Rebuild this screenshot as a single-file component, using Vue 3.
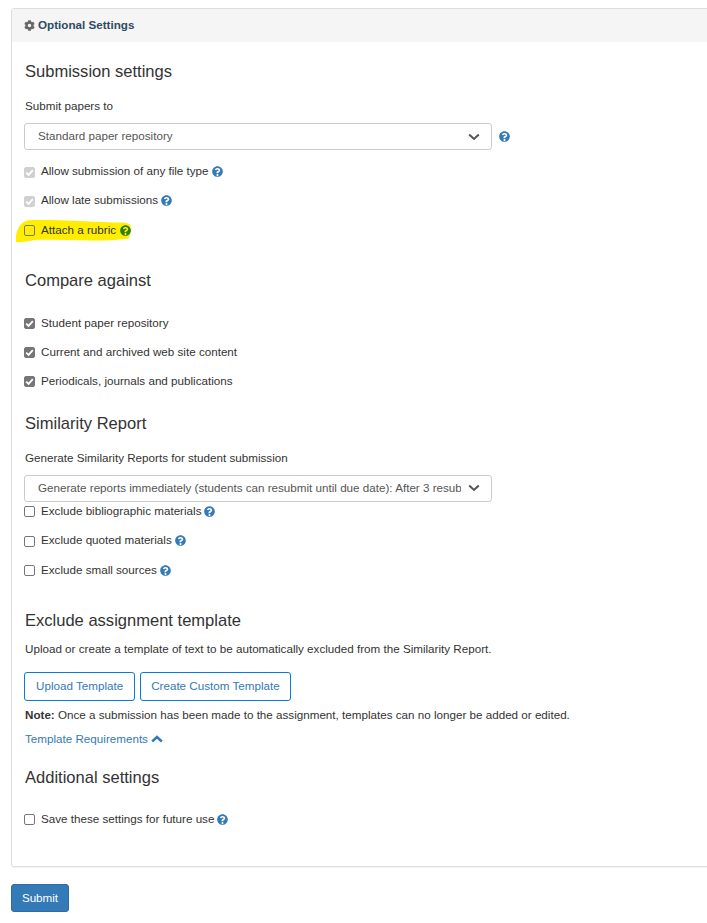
<script setup>
const cog = "M487.4 315.7l-42.6-24.6c4.3-23.2 4.3-47 0-70.2l42.6-24.6c4.9-2.8 7.1-8.6 5.5-14-11.1-35.6-30-67.8-54.7-94.6-3.8-4.1-10-5.1-14.8-2.3L380.8 110c-17.9-15.4-38.5-27.3-60.8-35.1V25.8c0-5.6-3.9-10.5-9.4-11.7-36.7-8.2-74.3-7.8-109.2 0-5.5 1.2-9.4 6.1-9.4 11.7V75c-22.2 7.9-42.8 19.8-60.8 35.1L88.7 85.5c-4.9-2.8-11-1.9-14.8 2.3-24.7 26.7-43.6 58.9-54.7 94.6-1.7 5.4.6 11.2 5.5 14L67.3 221c-4.3 23.2-4.3 47 0 70.2l-42.6 24.6c-4.9 2.8-7.1 8.6-5.5 14 11.1 35.6 30 67.8 54.7 94.6 3.8 4.1 10 5.1 14.8 2.3l42.6-24.6c17.9 15.4 38.5 27.3 60.8 35.1v49.2c0 5.6 3.9 10.5 9.4 11.7 36.7 8.2 74.3 7.8 109.2 0 5.5-1.2 9.4-6.1 9.4-11.7v-49.2c22.2-7.9 42.8-19.8 60.8-35.1l42.6 24.6c4.9 2.8 11 1.9 14.8-2.3 24.7-26.7 43.6-58.9 54.7-94.6 1.5-5.5-.7-11.3-5.6-14.1zM256 336c-44.1 0-80-35.9-80-80s35.9-80 80-80 80 35.9 80 80-35.9 80-80 80z";
const help = "M256 8C119 8 8 119.1 8 256s111 248 248 248 248-111 248-248S393 8 256 8zM263 90c-58 0-95 25-124 68-4 5-3 13 3 17l35 26c5 4 13 3 17-2 19-24 32-38 62-38 23 0 51 15 51 37 0 17-14 26-37 38-26 15-62 34-62 81v8c0 7 5 12 12 12h56c7 0 12-5 12-12v-5c0-33 96-34 96-122 0-67-69-108-121-108zM256 376c-26 0-47 21-47 47s21 47 47 47 47-21 47-47-21-47-47-47z";

const submission = [
  { label: "Allow submission of any file type", state: "disabled", info: true },
  { label: "Allow late submissions", state: "disabled", info: true },
  { label: "Attach a rubric", state: "off", info: true, marked: true },
];
const compare = [
  { label: "Student paper repository", state: "on" },
  { label: "Current and archived web site content", state: "on" },
  { label: "Periodicals, journals and publications", state: "on" },
];
const similarity = [
  { label: "Exclude bibliographic materials", state: "off", info: true },
  { label: "Exclude quoted materials", state: "off", info: true },
  { label: "Exclude small sources", state: "off", info: true },
];
</script>

<template>
  <div class="page">
    <section class="panel">
      <header class="panel-head">
        <svg class="cog" viewBox="0 0 512 512"><path :d="cog" /></svg>
        <span class="head-title">Optional Settings</span>
      </header>

      <div class="panel-body">
        <h3 class="first">Submission settings</h3>
        <p class="label">Submit papers to</p>
        <div class="select-row">
          <div class="select">
            <span class="select-text">Standard paper repository</span>
            <svg class="chevron" viewBox="0 0 12 8"><path d="M1.2 1.5 6 6l4.8-4.5" /></svg>
          </div>
          <svg class="help help-select" viewBox="0 0 512 512"><path :d="help" fill-rule="evenodd" /></svg>
        </div>
        <div class="checks checks-sub">
          <div v-for="item in submission" :key="item.label" class="check-row" :class="{ marked: item.marked }">
            <svg v-if="item.marked" class="marker" viewBox="0 0 120 24" preserveAspectRatio="none">
              <path d="M2 23C1 15 5 5 14 3 36 2 70 4 100 5c9 0 17 0 18 2 2 5 0 12-2 13-24 3-60 1-88 1-10 0-20 3-26 2z" />
            </svg>
            <span class="box" :class="item.state">
              <svg v-if="item.state !== 'off'" viewBox="0 0 12 12"><path d="M2.4 6.2 5 8.7l4.6-5.2" /></svg>
            </span>
            <span class="check-label">{{ item.label }}</span>
            <svg v-if="item.info" class="help" viewBox="0 0 512 512"><path :d="help" fill-rule="evenodd" /></svg>
          </div>
        </div>

        <h3 class="compare">Compare against</h3>
        <div class="checks checks-compare">
          <div v-for="item in compare" :key="item.label" class="check-row">
            <span class="box" :class="item.state">
              <svg viewBox="0 0 12 12"><path d="M2.4 6.2 5 8.7l4.6-5.2" /></svg>
            </span>
            <span class="check-label">{{ item.label }}</span>
          </div>
        </div>

        <h3 class="report">Similarity Report</h3>
        <p class="label label-report">Generate Similarity Reports for student submission</p>
        <div class="select-row">
          <div class="select">
            <span class="select-text">Generate reports immediately (students can resubmit until due date): After 3 resub</span>
            <svg class="chevron" viewBox="0 0 12 8"><path d="M1.2 1.5 6 6l4.8-4.5" /></svg>
          </div>
        </div>
        <div class="checks checks-report">
          <div v-for="item in similarity" :key="item.label" class="check-row">
            <span class="box" :class="item.state"></span>
            <span class="check-label">{{ item.label }}</span>
            <svg class="help" viewBox="0 0 512 512"><path :d="help" fill-rule="evenodd" /></svg>
          </div>
        </div>

        <h3 class="template">Exclude assignment template</h3>
        <p class="template-text">Upload or create a template of text to be automatically excluded from the Similarity Report.</p>
        <div class="template-buttons">
          <button class="btn-outline">Upload Template</button>
          <button class="btn-outline btn-custom">Create Custom Template</button>
        </div>
        <p class="note"><strong>Note:</strong> Once a submission has been made to the assignment, templates can no longer be added or edited.</p>
        <a class="requirements">
          Template Requirements
          <svg class="chevron-up" viewBox="0 0 12 8"><path d="M1.2 6.5 6 2l4.8 4.5" /></svg>
        </a>

        <h3 class="additional">Additional settings</h3>
        <div class="check-row save-row">
          <span class="box off"></span>
          <span class="check-label">Save these settings for future use</span>
          <svg class="help" viewBox="0 0 512 512"><path :d="help" fill-rule="evenodd" /></svg>
        </div>
      </div>
    </section>

    <button class="btn-submit">Submit</button>
  </div>
</template>

<style scoped>
.page {
  width: 760px;
  height: 923px;
  padding: 8px 0 0 11px;
  box-sizing: border-box;
  font-family: "Liberation Sans", Arial, sans-serif;
  font-size: 11.65px;
  line-height: 17px;
  color: #333;
}

.panel {
  height: 859px;
  box-sizing: border-box;
  background: #fff;
  border: 1px solid #ddd;
  border-radius: 3px;
  box-shadow: 0 1px 1px rgba(0, 0, 0, 0.05);
}

.panel-head {
  display: flex;
  align-items: center;
  gap: 3px;
  height: 33px;
  padding-left: 12px;
  background: #f5f5f5;
  color: #2f4a63;
  font-weight: 700;
}

.head-title {
  margin-bottom: 2px;
}

.cog {
  width: 11px;
  height: 11px;
  margin-bottom: 1px;
  fill: #666;
}

.panel-body {
  padding: 0 0 0 12px;
}

h3 {
  margin: 0 0 0 1px;
  font-size: 16.55px;
  font-weight: 400;
  line-height: 20px;
  color: #333;
}

h3.first {
  margin-top: 20px;
}

.label {
  margin: 15px 0 0 1px;
}

.select-row {
  display: flex;
  align-items: center;
  margin-top: 9px;
}

.select {
  display: flex;
  align-items: center;
  width: 468px;
  height: 27px;
  box-sizing: border-box;
  padding: 0 11px 0 13px;
  background: #fff;
  border: 1px solid #ccc;
  border-radius: 3px;
  color: #555;
}

.select-text {
  flex: 1;
  min-width: 0;
  overflow: hidden;
  white-space: nowrap;
  margin: 0 7px 2px 0;
}

.chevron {
  flex: none;
  width: 12px;
  height: 8px;
  fill: none;
  stroke: #555;
  stroke-width: 2;
}

.help {
  flex: none;
  width: 11px;
  height: 11px;
  fill: #337ab7;
}

.help-select {
  margin-left: 7px;
}

.checks {
  display: flex;
  flex-direction: column;
  gap: 12.4px;
}

.checks-sub {
  margin-top: 13px;
}

.checks-compare {
  margin-top: 24px;
  gap: 12px;
}

.checks-report {
  margin-top: 1px;
}

.check-row {
  position: relative;
  display: flex;
  align-items: center;
  height: 17px;
}

.check-label {
  margin: 0 3px 2px 6px;
  position: relative;
}

.box {
  position: relative;
  flex: none;
  width: 11px;
  height: 11px;
  margin-top: 1px;
  box-sizing: border-box;
  border: 1px solid #767676;
  border-radius: 2px;
  background: #fff;
}

.box svg {
  position: absolute;
  left: -1px;
  top: -1px;
  width: 11px;
  height: 11px;
  fill: none;
  stroke: #fff;
  stroke-width: 2;
}

.box.on {
  background: #767676;
}

.box.disabled {
  background: #d0d0d0;
  border-color: #d0d0d0;
}

.marked .help {
  position: relative;
  left: 1px;
  fill: #2e7d12;
}

.marked .box {
  background: transparent;
  position: relative;
}

.marker {
  position: absolute;
  left: -10px;
  top: -5px;
  width: 118px;
  height: 26px;
  fill: #ffee00;
}

h3.compare {
  margin-top: 32px;
}

h3.report {
  margin-top: 24px;
}

h3.template {
  margin-top: 32px;
}

.template-text {
  margin: 9px 0 0 1px;
}

.template-buttons {
  display: flex;
  gap: 5px;
  margin-top: 15px;
}

.btn-outline {
  height: 29px;
  padding: 0 11px 2px;
  background: #fff;
  border: 1px solid #0a7bd6;
  border-radius: 3px;
  color: #337ab7;
  font: inherit;
}

.btn-custom {
  padding: 0 10px 2px;
}

.note {
  margin: 5px 0 0 1px;
}

.requirements {
  display: flex;
  align-items: center;
  gap: 3px;
  margin: 7px 0 0 1px;
  color: #337ab7;
}

.chevron-up {
  width: 12px;
  height: 8px;
  margin-top: 1px;
  fill: none;
  stroke: #337ab7;
  stroke-width: 2.4;
}

h3.additional {
  margin-top: 21px;
}

.save-row {
  margin-top: 23px;
}

.btn-submit {
  display: block;
  width: 58px;
  height: 28px;
  margin-top: 17px;
  padding: 0 0 2px;
  background: #337ab7;
  border: 1px solid #2e6da4;
  border-radius: 3px;
  color: #fff;
  font: inherit;
}
</style>

<style>
html,
body {
  overflow: hidden;
  background: #fff;
}
</style>
